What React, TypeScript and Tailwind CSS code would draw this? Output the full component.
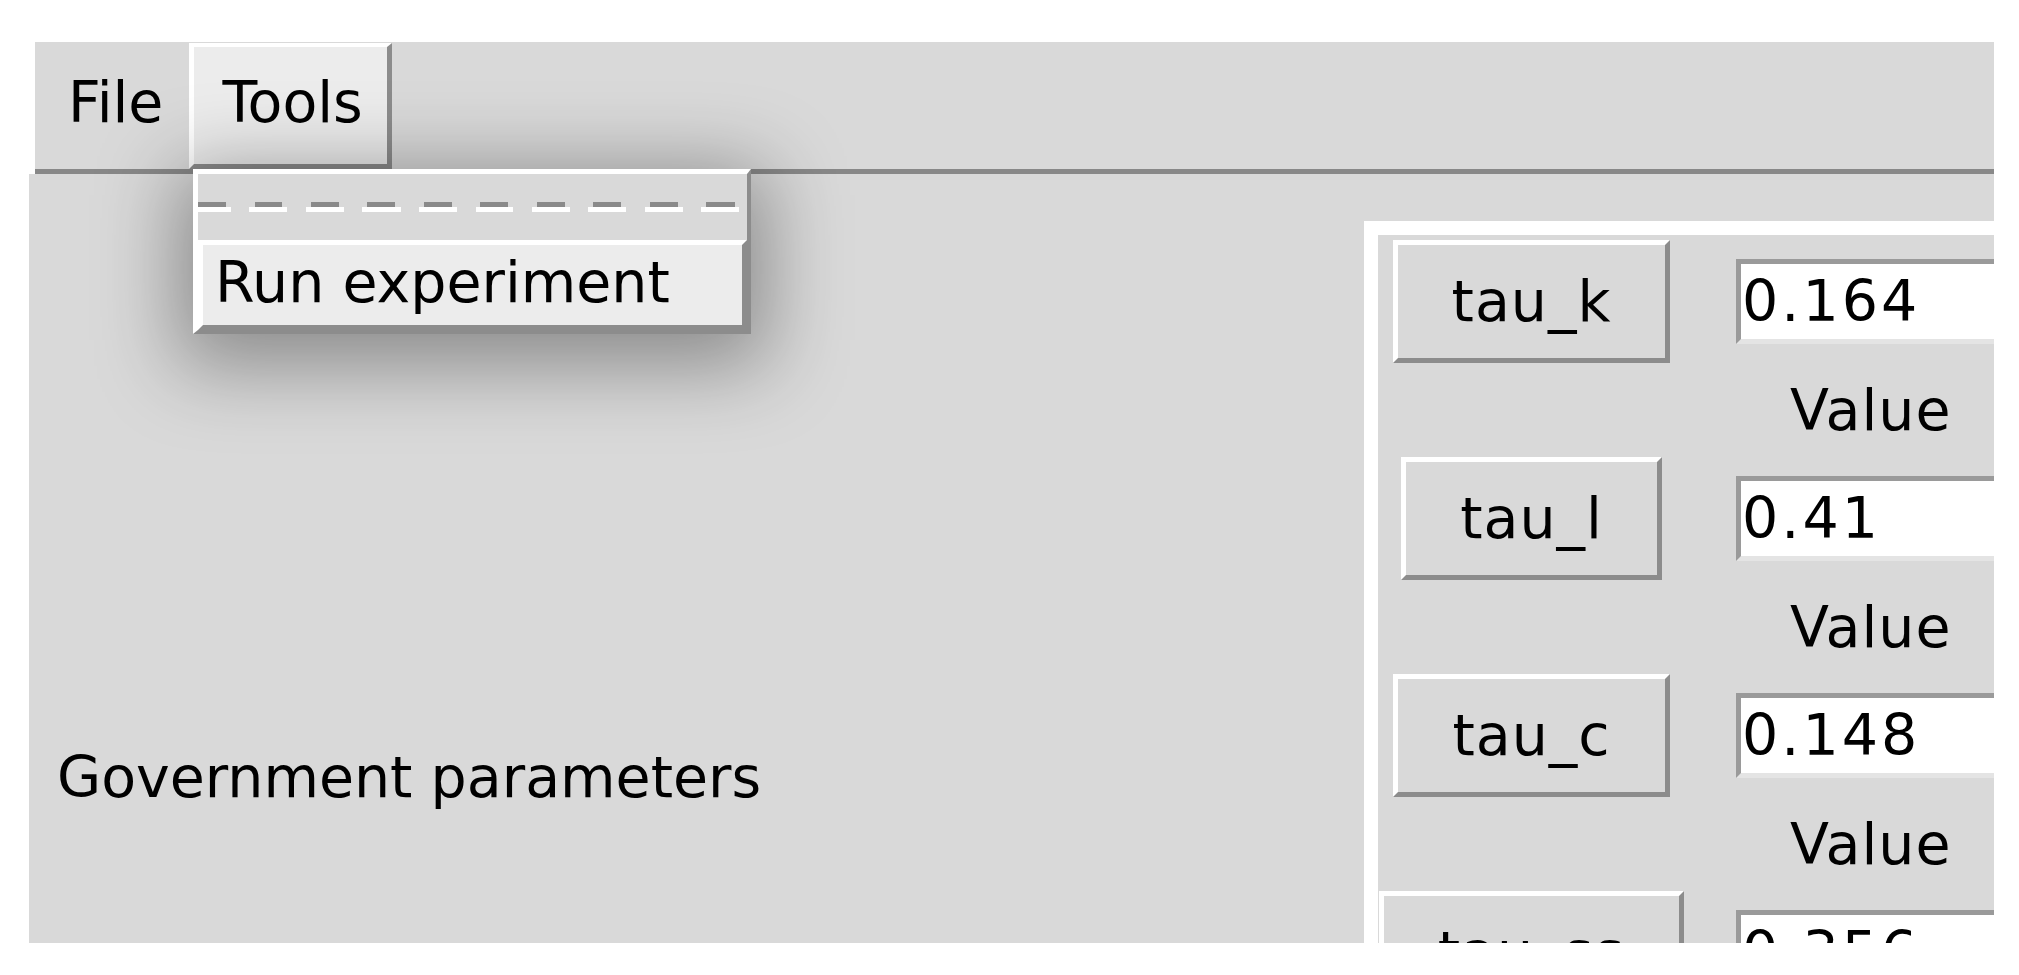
import { Fragment } from "react";

const params = [
  { name: "tau_k", value: "0.164" },
  { name: "tau_l", value: "0.41" },
  { name: "tau_c", value: "0.148" },
  { name: "tau_ss", value: "0.356" },
];

function ParamRow({ name, value }: { name: string; value: string }) {
  return (
    <Fragment>
      <div className="flex h-[122px] items-center justify-center">
        <button className="h-[123px] border-[5px] border-t-white border-l-white border-r-[#8c8c8c] border-b-[#8c8c8c] bg-[#d9d9d9] px-[54px] leading-[66px] tracking-[1px]">
          {name}
        </button>
      </div>
      <div className="flex h-[122px] items-center">
        <div className="flex h-[85px] w-[600px] items-center border-[5px] border-t-[#9a9a9a] border-l-[#9a9a9a] border-r-[#e4e4e4] border-b-[#e4e4e4] bg-white pl-[1px] leading-[66px] tracking-[3px]">
          {value}
        </div>
      </div>
      <div />
      <div className="flex h-[95px] items-center pl-[54px] leading-[66px] tracking-[1px]">Value</div>
    </Fragment>
  );
}

export default function App() {
  return (
    <div className="min-h-screen bg-white font-['DejaVu_Sans',sans-serif] text-[57px] text-black">
      <div className="pt-[42px] pl-[29px]">
        <div className="relative h-[901px] w-[1965px] overflow-hidden">
          {/* Menubar */}
          <div className="ml-[6px] flex h-[132px] border-b-[5px] border-[#888888] bg-[#d9d9d9]">
            <div className="h-[127px] pl-[33px] pr-[26px] pt-[27px] leading-[66px]">File</div>
            <div className="mt-[1px] h-[126px] border-t-[4px] border-l-[5px] border-r-[5px] border-b-[5px] border-t-white border-l-white border-r-[#8c8c8c] border-b-[#8c8c8c] bg-[#ececec] pl-[28px] pr-[24px] pt-[22px] leading-[66px]">
              Tools
            </div>
          </div>

          {/* Body */}
          <div className="flex h-[769px] bg-[#d9d9d9]">
            <div className="w-[1335px] shrink-0 pl-[28px] pt-[570px] leading-[66px]">
              Government parameters
            </div>
            <div className="mt-[47px] shrink-0 border-t-[14px] border-l-[14px] border-white pt-[5px]">
              <div className="grid grid-cols-[307px_600px] gap-x-[51px]">
                {params.map((p) => (
                  <ParamRow key={p.name} name={p.name} value={p.value} />
                ))}
              </div>
            </div>
          </div>

          {/* Tools dropdown */}
          <div className="absolute left-[164px] top-[127px] w-[558px] border-t-[5px] border-l-[5px] border-r-[4px] border-b-[4px] border-t-white border-l-white border-r-[#8c8c8c] border-b-[#8c8c8c] bg-[#d9d9d9] shadow-[0_16px_80px_16px_rgba(0,0,0,0.36)]">
            <div className="h-[66px] pt-[28px]">
              <div className="h-[5px] bg-[repeating-linear-gradient(90deg,#8a8a8a_0_28px,transparent_28px_56.5px)]" />
              <div className="h-[5px] bg-[repeating-linear-gradient(90deg,#ffffff_0_33px,transparent_33px_51.5px,#ffffff_51.5px_56.5px)]" />
            </div>
            <div className="h-[90px] border-[5px] border-t-white border-l-white border-r-[#8c8c8c] border-b-[#8c8c8c] bg-[#ececec] pl-[12px] pt-[4px] leading-[66px]">
              Run experiment
            </div>
          </div>
        </div>
      </div>
    </div>
  );
}
